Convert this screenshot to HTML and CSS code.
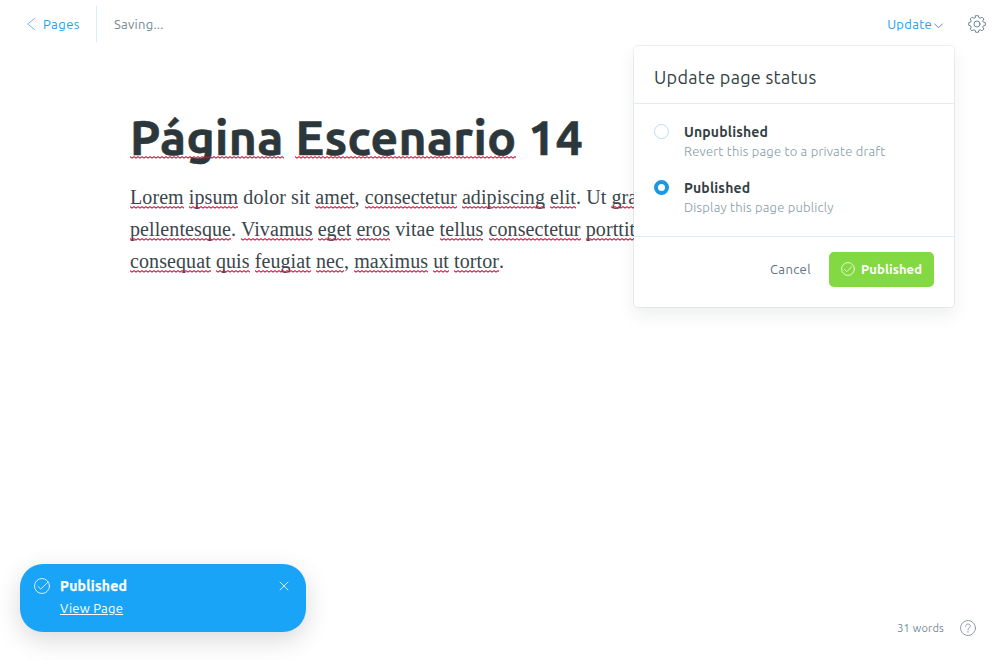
FILE: index.html
```html
<!DOCTYPE html>
<html lang="es">
<head>
<meta charset="utf-8">
<title>Página Escenario 14</title>
<link rel="stylesheet" href="styles.css">
</head>
<body>
<div class="app">
  <header class="topbar">
    <a class="back"><svg width="10" height="14" viewBox="0 0 10 14"><path d="M8.500 1.500 1.700 7l6.800 5.500"/></svg><span>Pages</span></a>
    <span class="saving">Saving...</span>
    <div class="actions">
      <button class="update"><span>Update</span><svg width="9" height="6" viewBox="0 0 9 6"><path d="M.5.8 4.500 4.800 8.500.8"/></svg></button>
      <svg class="gear" width="18" height="18" viewBox="0 0 18 18"><path d="M7.700.7h2.600l.6 2 1.200.5 1.900-1 1.800 1.800-1 1.900.5 1.200 2 .6v2.600l-2 .6-.5 1.200 1 1.900-1.800 1.800-1.900-1-1.200.5-.6 2H7.700l-.6-2-1.200-.5-1.900 1-1.800-1.800 1-1.900-.5-1.200-2-.6V7.700l2-.6.5-1.200-1-1.900L4 2.200l1.900 1 1.200-.5z"/><circle cx="9" cy="9" r="3"/></svg>
    </div>
  </header>

  <main class="editor">
    <h1 class="title"><span class="sp">Página</span> <span class="sp">Escenario</span> 14</h1>
    <p class="body-text"><span class="sp">Lorem</span> <span class="sp">ipsum</span> dolor sit <span class="sp">amet</span>, <span class="sp">consectetur</span> <span class="sp">adipiscing</span> <span class="sp">elit</span>. Ut <span class="sp">gravida</span><br><span class="sp">pellentesque</span>. <span class="sp">Vivamus</span> <span class="sp">eget</span> <span class="sp">eros</span> vitae <span class="sp">tellus</span> <span class="sp">consectetur</span> <span class="sp">porttitor</span><br><span class="sp">consequat</span> <span class="sp">quis</span> <span class="sp">feugiat</span> <span class="sp">nec</span>, <span class="sp">maximus</span> <span class="sp">ut</span> <span class="sp">tortor</span>.</p>
  </main>

  <section class="panel">
    <h2 class="panel-head">Update page status</h2>
    <div class="options">
      <label class="option"><i class="radio"></i><span class="option-text"><b>Unpublished</b><small>Revert this page to a private draft</small></span></label>
      <label class="option"><i class="radio on"></i><span class="option-text"><b>Published</b><small>Display this page publicly</small></span></label>
    </div>
    <footer class="panel-foot">
      <button class="cancel">Cancel</button>
      <button class="publish"><svg width="14" height="14" viewBox="0 0 14 14"><circle cx="7" cy="7" r="6.400"/><path d="m3.500 7.500 2.300 2.200 4.700-5"/></svg><span>Published</span></button>
    </footer>
  </section>

  <aside class="toast">
    <svg class="toast-check" width="16" height="16" viewBox="0 0 16 16"><circle cx="8" cy="8" r="7.500"/><path d="m4 8.400 2.800 2.700 7.100-6.900"/></svg>
    <div class="toast-text"><b>Published</b><a>View Page</a></div>
    <svg class="close" width="10" height="10" viewBox="0 0 10 10"><path d="m1 1 8 8M9 1 1 9"/></svg>
  </aside>

  <div class="status">
    <span>31 words</span>
    <svg width="16" height="16" viewBox="0 0 16 16"><circle cx="8" cy="8" r="7.500"/><path d="M5.700 6.300C5.700 4.800 6.700 4 8 4s2.300.8 2.300 2.100S9.300 8 8.500 8.500Q8 8.800 8 9.800M8 11.300v1"/></svg>
  </div>
</div>
</body>
</html>
```
FILE: styles.css
```css
* { box-sizing: border-box; }
body {
  margin: 0;
  font-family: Ubuntu, "Noto Sans", "Open Sans", sans-serif;
  font-size: 13px;
  letter-spacing: .2px;
  color: #343f44;
  background: #fff;
}
svg { display: block; flex: none; fill: none; stroke: currentColor; stroke-linecap: round; stroke-linejoin: round; }
button { border: 0; padding: 0; background: none; font: inherit; display: flex; align-items: center; }
.app { position: relative; width: 1000px; height: 660px; overflow: hidden; }

.topbar { display: flex; align-items: center; height: 48px; padding: 0 14px 0 26px; }
.back { display: flex; align-items: center; gap: 7px; height: 36px; padding-right: 16px; border-right: 1px solid #dfecf5; color: #1fa0ea; letter-spacing: .45px; }
.back svg { stroke-width: .7; }
.saving { margin-left: 17px; color: #738a94; letter-spacing: .27px; }
.actions { display: flex; align-items: center; gap: 25px; margin-left: auto; }
.update { gap: 2px; color: #1fa0ea; letter-spacing: .3px; }
.update svg { margin-top: 3px; stroke: #5e7f93; stroke-width: .9; }
.gear { color: #5f7b87; stroke-width: .9; }

.editor { padding: 61px 0 0 130px; white-space: nowrap; }
.title { margin: 0; height: 58px; font-size: 48px; line-height: 57px; font-weight: 700; letter-spacing: .38px; color: #2c373b; -webkit-text-stroke: .6px #2c373b; }
.body-text { margin: 14px 0 0; font: 20px/32px "Liberation Serif", serif; letter-spacing: .09px; color: #3a464b; }
.sp { position: relative; }
.sp::after {
  content: "";
  position: absolute;
  left: 0;
  right: 0;
  bottom: -1px;
  height: 3px;
  background: url("data:image/svg+xml,%3Csvg xmlns='http://www.w3.org/2000/svg' width='4' height='3'%3E%3Cpath d='M-2 2.100 0 .7 2 2.100 4 .7 6 2.100' fill='none' stroke='%23f00030' stroke-width='1.100'/%3E%3C/svg%3E") repeat-x;
}
.title .sp::after { bottom: 5px; }

.panel { position: absolute; left: 634px; top: 46px; width: 320px; height: 261px; border-radius: 4px; background: #fff; box-shadow: 0 0 0 1px rgba(99,114,130,.1), 0 8px 18px rgba(27,39,51,.08); }
.panel-head { margin: 0; height: 58px; padding: 0 20px; border-bottom: 1px solid #dfecf5; font-size: 18px; font-weight: 400; line-height: 62px; letter-spacing: .3px; }
.options { display: flex; flex-direction: column; gap: 16px; height: 133px; padding: 18px 20px 0; border-bottom: 1px solid #dfecf5; }
.option { display: flex; gap: 15px; height: 40px; }
.radio { width: 15px; height: 15px; margin-top: 2px; border: 1px solid #bfdcf0; border-radius: 50%; }
.radio.on { border: 4px solid #1b97e4; }
.option-text { display: flex; flex-direction: column; }
.option b { height: 20px; font-size: 14px; line-height: 20px; font-weight: 600; letter-spacing: .16px; }
.option small { font-size: 13px; line-height: 18px; font-weight: 300; color: #839aa4; letter-spacing: .22px; }
.panel-foot { display: flex; align-items: center; justify-content: flex-end; gap: 18px; padding: 15px 20px 0; }
.cancel { padding-bottom: 2px; color: #5d737d; letter-spacing: .4px; }
.publish { width: 105px; height: 35px; gap: 6px; padding: 0 0 1px 12px; border-radius: 5px; background: #82d941; color: #fff; font-weight: 600; letter-spacing: .1px; }
.publish span { padding-bottom: 1px; }
.publish svg { stroke-width: .8; }

.toast { position: absolute; left: 20px; top: 564px; display: flex; width: 286px; height: 68px; padding: 12px 17px 0 14px; border-radius: 23px; background: #1aa4f8; color: #fff; box-shadow: 0 8px 26px rgba(0,0,0,.15); }
.toast svg { stroke-width: .8; }
.toast-check { margin-top: 2px; }
.toast-text { display: flex; flex-direction: column; align-items: flex-start; margin-left: 10px; line-height: 20px; }
.toast-text b { font-size: 14px; letter-spacing: .27px; -webkit-text-stroke: .25px #fff; }
.toast-text a { margin-top: 2px; text-decoration: underline; letter-spacing: .23px; }
.close { margin: 5px 0 0 auto; }

.status { position: absolute; right: 24px; top: 620px; display: flex; align-items: center; gap: 16px; height: 16px; font-size: 11px; color: #738a94; }
.status svg { stroke-width: .8; }
```
